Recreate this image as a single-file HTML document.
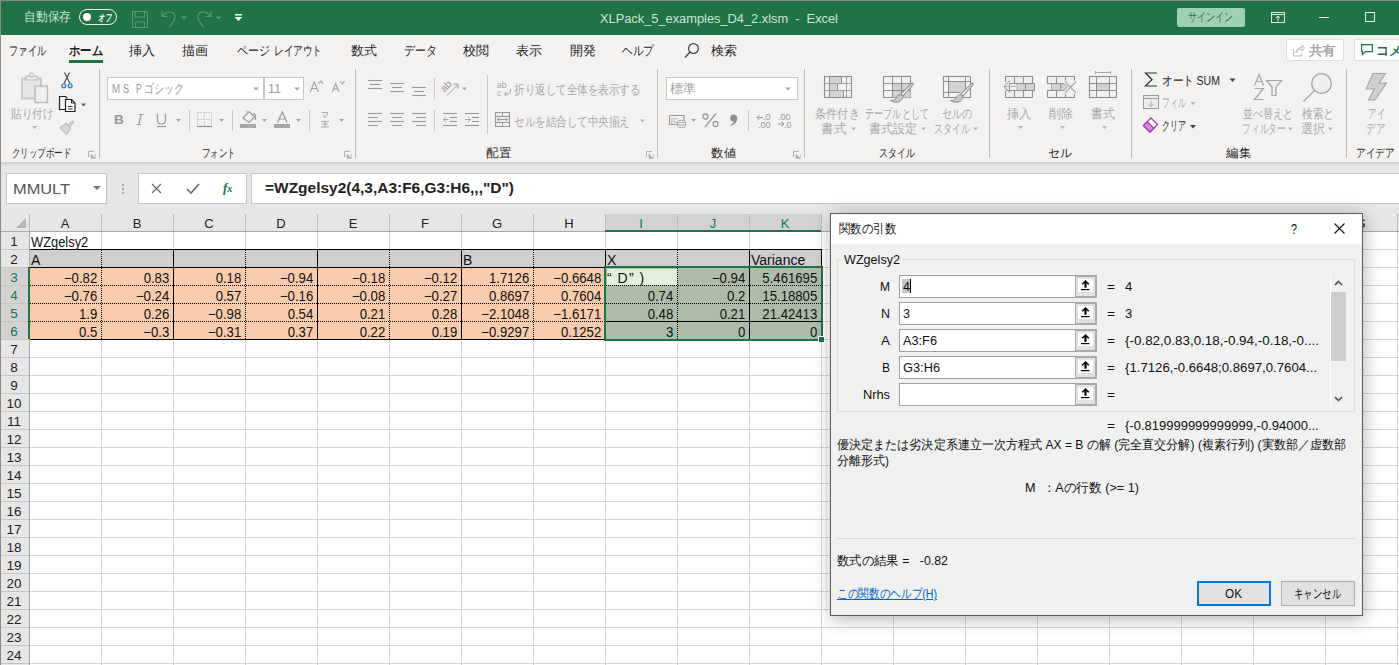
<!DOCTYPE html><html><head><meta charset="utf-8"><style>
*{margin:0;padding:0;box-sizing:border-box}
html,body{width:1399px;height:665px;overflow:hidden;background:#fff;font-family:"Liberation Sans",sans-serif;color:#222}
div,span,svg{position:absolute}
.t{white-space:nowrap;line-height:1;transform-origin:0 0}
.sep{width:1px;background:#bdbab7}
.rh{left:0px;width:28px;font-size:13.5px;text-align:center;color:#222;line-height:18px;height:18px}
.ch{top:214px;height:17px;width:72px;font-size:13px;text-align:center;color:#222;line-height:19px}
.c{font-size:14px;height:18px;line-height:21px;color:#111}
.r{text-align:right;padding-right:4px;transform:scaleX(0.94);transform-origin:100% 0}
.dl{font-size:12.5px;color:#111;line-height:1}
</style></head><body>
<div style="left:0;top:0;width:1399px;height:35px;background:#217346"></div>
<div style="left:0;top:0;width:1399px;height:1px;background:#8a8a8a"></div>
<div class="t" style="left:24px;top:10px;color:#c9e0d2;font-size:13px;transform:scaleX(0.904);">自動保存</div>
<div style="left:79px;top:9px;width:38px;height:16px;border:1.5px solid #e8f2ec;border-radius:8px"></div>
<div style="left:83px;top:13px;width:8px;height:8px;border-radius:50%;background:#fff"></div>
<div class="t" style="left:98px;top:13px;color:#fff;font-size:10px;font-weight:bold;font-style:italic;transform:scaleX(0.650);">オフ</div>
<svg style="left:132px;top:11px" width="17" height="17" viewBox="0 0 17 17"><path d="M0.5 0.5h13.5l1.5 1.5v14.5h-15z M3 0.5v5.5h9.5v-5.5 M3.5 16.5v-5.5h9v5.5" fill="none" stroke="#5c9a76" stroke-width="1.1"/></svg>
<svg style="left:161px;top:10px" width="30" height="18" viewBox="0 0 30 18"><path d="M1 1v5.5h5.5 M1.5 6.5c3-5.5 12-6.5 12.5 0c0.2 3-2.5 7-5.5 10.5" fill="none" stroke="#5c9a76" stroke-width="1.2"/><path d="M20 6.5h6l-3 3z" fill="#5c9a76"/></svg>
<svg style="left:196px;top:10px" width="30" height="18" viewBox="0 0 30 18"><path d="M15 1v5.5h-5.5 M14.5 6.5c-3-5.5-12-6.5-12.5 0c-0.2 3 2.5 7 5.5 10.5" fill="none" stroke="#5c9a76" stroke-width="1.2"/><path d="M19.5 6.5h6l-3 3z" fill="#5c9a76"/></svg>
<svg style="left:234px;top:14px" width="9" height="8" viewBox="0 0 9 8"><rect x="1" y="0" width="7" height="1.5" fill="#fff"/><path d="M0.5 3h8l-4 4z" fill="#fff"/></svg>
<div class="t" style="left:600px;top:12px;color:#cfe4d7;font-size:13px;transform:scaleX(0.986);">XLPack_5_examples_D4_2.xlsm&nbsp;&nbsp;-&nbsp;&nbsp;Excel</div>
<div style="left:1177px;top:8px;width:68px;height:19px;background:#a0d0b3;border-radius:2px"></div>
<div class="t" style="left:1188px;top:11px;color:#217346;font-size:12px;transform:scaleX(0.750);">サインイン</div>
<svg style="left:1271px;top:12px" width="14" height="11" viewBox="0 0 14 11"><rect x="0.5" y="0.5" width="13" height="10" fill="none" stroke="#d8e8de"/><path d="M0.5 2.5h13 M7 9.5v-5.5 M5 6l2-2l2 2" fill="none" stroke="#d8e8de"/></svg>
<div style="left:1319px;top:17px;width:10px;height:1px;background:#e8f2ec"></div>
<div style="left:1365px;top:12px;width:10px;height:10px;border:1px solid #e8f2ec"></div>
<div style="left:0;top:35px;width:1399px;height:127px;background:#f3f2f1"></div>
<div style="left:0;top:0;width:1px;height:665px;background:#8a8a8a;z-index:50"></div>
<div class="t" style="left:9px;top:44px;color:#262626;font-size:13px;transform:scaleX(0.712);">ファイル</div>
<div class="t" style="left:69px;top:44px;color:#262626;font-size:13px;font-weight:bold;transform:scaleX(0.872);">ホーム</div>
<div class="t" style="left:129px;top:44px;color:#262626;font-size:13px;">挿入</div>
<div class="t" style="left:182px;top:44px;color:#262626;font-size:13px;">描画</div>
<div class="t" style="left:237px;top:44px;color:#262626;font-size:13px;transform:scaleX(0.846);">ページ</div>
<div class="t" style="left:274px;top:44px;color:#262626;font-size:13px;transform:scaleX(0.738);">レイアウト</div>
<div class="t" style="left:351px;top:44px;color:#262626;font-size:13px;">数式</div>
<div class="t" style="left:404px;top:44px;color:#262626;font-size:13px;transform:scaleX(0.846);">データ</div>
<div class="t" style="left:463px;top:44px;color:#262626;font-size:13px;">校閲</div>
<div class="t" style="left:516px;top:44px;color:#262626;font-size:13px;">表示</div>
<div class="t" style="left:570px;top:44px;color:#262626;font-size:13px;">開発</div>
<div class="t" style="left:622px;top:44px;color:#262626;font-size:13px;transform:scaleX(0.821);">ヘルプ</div>
<div class="t" style="left:711px;top:44px;color:#262626;font-size:13px;">検索</div>
<div style="left:69px;top:60px;width:34px;height:3px;background:#217346"></div>
<svg style="left:0;top:0" width="1399" height="70" viewBox="0 0 1399 70"><circle cx="693.5" cy="48.5" r="4.9" fill="none" stroke="#444" stroke-width="1.2"/><path d="M690 52l-5 5.5" stroke="#444" stroke-width="1.3"/></svg>
<div style="left:1286px;top:39px;width:58px;height:22px;background:#fff;border:1px solid #e1dfdd;border-radius:2px"></div>
<svg style="left:1292px;top:44px" width="13" height="13" viewBox="0 0 13 13"><path d="M1.5 5v7h8v-2" fill="none" stroke="#bbb"/><path d="M4 9c0-4 3-5.5 6-5.5v-2.5l2.5 3l-2.5 3v-2c-3 0-5 1-6 4z" fill="none" stroke="#bbb"/></svg>
<div class="t" style="left:1309px;top:44px;color:#a6a6a6;font-size:13px;font-weight:bold;transform:scaleX(1.038);">共有</div>
<div style="left:1354px;top:39px;width:60px;height:22px;background:#fff;border:1px solid #e1dfdd;border-radius:2px"></div>
<svg style="left:1361px;top:44px" width="12" height="12" viewBox="0 0 12 12"><path d="M0.6 0.6h10.8v7h-7l-3 3v-3h-0.8z" fill="none" stroke="#217346" stroke-width="1.2"/></svg>
<div class="t" style="left:1376px;top:44px;color:#217346;font-size:13px;font-weight:bold;">コメント</div>
<div class="sep" style="left:99px;top:69px;height:89px"></div>
<div class="sep" style="left:355px;top:69px;height:89px"></div>
<div class="sep" style="left:657px;top:69px;height:89px"></div>
<div class="sep" style="left:804px;top:69px;height:89px"></div>
<div class="sep" style="left:989px;top:69px;height:89px"></div>
<div class="sep" style="left:1131px;top:69px;height:89px"></div>
<div class="sep" style="left:1346px;top:69px;height:89px"></div>
<div class="t" style="left:12px;top:147px;color:#262626;font-size:12px;transform:scaleX(0.702);">クリップボード</div>
<div class="t" style="left:202px;top:147px;color:#262626;font-size:12px;transform:scaleX(0.708);">フォント</div>
<div class="t" style="left:486px;top:147px;color:#262626;font-size:12px;transform:scaleX(1.042);">配置</div>
<div class="t" style="left:711px;top:147px;color:#262626;font-size:12px;transform:scaleX(1.042);">数値</div>
<div class="t" style="left:879px;top:147px;color:#262626;font-size:12px;transform:scaleX(0.750);">スタイル</div>
<div class="t" style="left:1048px;top:147px;color:#262626;font-size:12px;">セル</div>
<div class="t" style="left:1226px;top:147px;color:#262626;font-size:12px;transform:scaleX(1.042);">編集</div>
<div class="t" style="left:1356px;top:147px;color:#262626;font-size:12px;transform:scaleX(0.812);">アイデア</div>
<svg style="left:88px;top:151px" width="8" height="8" viewBox="0 0 8 8"><path d="M0.5 6v-5.5h5.5" fill="none" stroke="#b0b0b0"/><path d="M3 3l4.5 4.5h-4.5z M7.5 3v4.5" fill="#b0b0b0" stroke="#b0b0b0" stroke-width="0.6"/></svg>
<svg style="left:344px;top:151px" width="8" height="8" viewBox="0 0 8 8"><path d="M0.5 6v-5.5h5.5" fill="none" stroke="#b0b0b0"/><path d="M3 3l4.5 4.5h-4.5z M7.5 3v4.5" fill="#b0b0b0" stroke="#b0b0b0" stroke-width="0.6"/></svg>
<svg style="left:646px;top:151px" width="8" height="8" viewBox="0 0 8 8"><path d="M0.5 6v-5.5h5.5" fill="none" stroke="#b0b0b0"/><path d="M3 3l4.5 4.5h-4.5z M7.5 3v4.5" fill="#b0b0b0" stroke="#b0b0b0" stroke-width="0.6"/></svg>
<svg style="left:793px;top:151px" width="8" height="8" viewBox="0 0 8 8"><path d="M0.5 6v-5.5h5.5" fill="none" stroke="#b0b0b0"/><path d="M3 3l4.5 4.5h-4.5z M7.5 3v4.5" fill="#b0b0b0" stroke="#b0b0b0" stroke-width="0.6"/></svg>
<svg style="left:0;top:0;overflow:visible" width="1399" height="170" viewBox="0 0 1399 170"><path d="M22 78.5h4v-2h11v2h4v20h-19z" fill="#e6e6e6" stroke="#c9c9c9" stroke-width="2"/><path d="M26 76.5h11v3.5h-11z" fill="#f3f2f1" stroke="#c9c9c9" stroke-width="1.3"/><circle cx="31.5" cy="75" r="2.2" fill="none" stroke="#c9c9c9" stroke-width="1.2"/><rect x="35" y="86" width="12.5" height="16.5" fill="#efefef" stroke="#b9b9b9" stroke-width="1.4"/><path d="M32 126h5.5l-2.75 3z" fill="#b4b4b4"/><path d="M64.5 72.5l5.5 11 M69.5 72.5l-5.5 11" stroke="#444" stroke-width="1.1"/><circle cx="63.8" cy="85.8" r="1.9" fill="none" stroke="#2b88d8" stroke-width="1.4"/><circle cx="70.2" cy="85.8" r="1.9" fill="none" stroke="#2b88d8" stroke-width="1.4"/><path d="M65.5 109.5h-6v-13h6l2 2" fill="none" stroke="#222" stroke-width="1.2"/><path d="M65.5 99.5h6l3.5 3.5v8.5h-9.5z" fill="#fff" stroke="#222" stroke-width="1.2"/><path d="M71.5 99.5v3.5h3.5" fill="none" stroke="#222"/><path d="M68 106.5h4.5 M68 109h4.5" stroke="#333"/><path d="M81 103.5h5l-2.5 3z" fill="#555"/><path d="M67 126l5-4.5c0.8-0.8 2-0.2 1.5 0.8l-4.5 5" fill="none" stroke="#bdbdbd" stroke-width="1.3"/><path d="M60 127.5l6-4l4.5 4.5l-4 6.5z" fill="#d8d8d8" stroke="#bdbdbd" stroke-width="1.1"/><text x="114" y="124" font-size="13.5" font-weight="bold" fill="#9a9a9a" font-family="Liberation Sans">B</text><path d="M139 114.5h4.5 M136.5 124.5h4.5 M141.3 114.5l-2.5 10" stroke="#9a9a9a" stroke-width="1.2" fill="none"/><path d="M157.5 114v6c0 3 1.5 4 4 4s4-1 4-4v-6" fill="none" stroke="#9a9a9a" stroke-width="1.2"/><path d="M157 126.5h9" stroke="#9a9a9a" stroke-width="1.2"/><path d="M176 119h5l-2.5 3z" fill="#a0a0a0"/><path d="M189.5 110v21 M232.5 110v21 M309.5 110v21" stroke="#c9c6c3"/><path d="M197.5 112.5h14v13.5 M197.5 112.5v13.5 M204.5 113v13 M198 119.5h13" fill="none" stroke="#bdbdbd" stroke-dasharray="1.5 1.2"/><path d="M197 126.5h15" stroke="#8f8f8f" stroke-width="1.1"/><path d="M219 119h5l-2.5 3z" fill="#a0a0a0"/><path d="M243 118l6-6.5l5.5 5.5l-5.5 5.5z" fill="none" stroke="#9a9a9a" stroke-width="1.2"/><path d="M252 115c1.5-2.5 3.5-1.5 3.5 2v3" fill="none" stroke="#9a9a9a" stroke-width="1.2"/><path d="M247.5 112l-1.5-1.5" stroke="#9a9a9a"/><rect x="240" y="124" width="16" height="4" fill="#a9a7a5"/><path d="M262 119h5l-2.5 3z" fill="#a0a0a0"/><path d="M277.5 122.5l4.8-10.5l4.8 10.5 M279.3 119h6" fill="none" stroke="#9a9a9a" stroke-width="1.2"/><rect x="274" y="124" width="16" height="4" fill="#a9a7a5"/><path d="M296 119h5l-2.5 3z" fill="#a0a0a0"/><path d="M321.5 112.5h6c0 2.5-1 4-3 5 M324 114.5v3" fill="none" stroke="#aaa" stroke-width="1"/><path d="M321 121.5h8 M322 124h6 M321 127h8 M325 121v6" stroke="#aaa" stroke-width="1.2"/><path d="M339 119h5l-2.5 3z" fill="#a0a0a0"/><path d="M368 80.5h14" stroke="#9a9a9a" stroke-width="1.1"/><path d="M370 84.5h10" stroke="#9a9a9a" stroke-width="1.1"/><path d="M368 88.5h14" stroke="#9a9a9a" stroke-width="1.1"/><path d="M390 83.5h14" stroke="#9a9a9a" stroke-width="1.1"/><path d="M392 87.5h10" stroke="#9a9a9a" stroke-width="1.1"/><path d="M390 91.5h14" stroke="#9a9a9a" stroke-width="1.1"/><path d="M412 87.5h14" stroke="#9a9a9a" stroke-width="1.1"/><path d="M414 91.5h10" stroke="#9a9a9a" stroke-width="1.1"/><path d="M412 95.5h14" stroke="#9a9a9a" stroke-width="1.1"/><path d="M368 113.5h14" stroke="#9a9a9a" stroke-width="1.1"/><path d="M368 117.5h10" stroke="#9a9a9a" stroke-width="1.1"/><path d="M368 121.5h14" stroke="#9a9a9a" stroke-width="1.1"/><path d="M368 125.5h10" stroke="#9a9a9a" stroke-width="1.1"/><path d="M390 113.5h14" stroke="#9a9a9a" stroke-width="1.1"/><path d="M392 117.5h10" stroke="#9a9a9a" stroke-width="1.1"/><path d="M390 121.5h14" stroke="#9a9a9a" stroke-width="1.1"/><path d="M392 125.5h10" stroke="#9a9a9a" stroke-width="1.1"/><path d="M412 113.5h14" stroke="#9a9a9a" stroke-width="1.1"/><path d="M416 117.5h10" stroke="#9a9a9a" stroke-width="1.1"/><path d="M412 121.5h14" stroke="#9a9a9a" stroke-width="1.1"/><path d="M416 125.5h10" stroke="#9a9a9a" stroke-width="1.1"/><path d="M434.5 78v21 M434.5 110v21 M487.5 75v59" stroke="#c6c6c6"/><g transform="translate(-2.5,-3) rotate(-45 449 88)"><text x="442" y="92" font-size="10.5" fill="#9a9a9a" font-family="Liberation Sans">ab</text></g><path d="M447 95.5l11-11 M453.5 84h4.5v4.5" fill="none" stroke="#9a9a9a" stroke-width="1"/><path d="M462 87.5h5l-2.5 3z" fill="#a0a0a0"/><path d="M443 113.5h14" stroke="#9a9a9a" stroke-width="1.1"/><path d="M450 117.5h7" stroke="#9a9a9a" stroke-width="1.1"/><path d="M450 121.5h7" stroke="#9a9a9a" stroke-width="1.1"/><path d="M443 125.5h14" stroke="#9a9a9a" stroke-width="1.1"/><path d="M443.5 119.5h5 M446 117l-2.5 2.5l2.5 2.5" fill="none" stroke="#aaa"/><path d="M465 113.5h14" stroke="#9a9a9a" stroke-width="1.1"/><path d="M472 117.5h7" stroke="#9a9a9a" stroke-width="1.1"/><path d="M472 121.5h7" stroke="#9a9a9a" stroke-width="1.1"/><path d="M465 125.5h14" stroke="#9a9a9a" stroke-width="1.1"/><path d="M465 119.5h5.5 M468 117l2.5 2.5l-2.5 2.5" fill="none" stroke="#aaa"/><text x="497" y="88" font-size="8.5" fill="#a4a4a4" font-family="Liberation Sans">ab</text><text x="497" y="95.5" font-size="8.5" fill="#a4a4a4" font-family="Liberation Sans">c</text><path d="M510.5 89v2.5c0 1.5-1 2.5-2.5 2.5h-3 M506.5 92l-2 2l2 2" fill="none" stroke="#a4a4a4" stroke-width="1"/><path d="M495.5 112.5h14v14h-14z" fill="#efefef" stroke="#9a9a9a" stroke-width="1.1"/><path d="M495.5 116.5h14 M495.5 122.5h14 M502.5 112.5v4 M502.5 122.5v4" stroke="#9a9a9a"/><path d="M497.5 119.5h10 M499.5 117.5l-2 2l2 2 M505.5 117.5l2 2l-2 2" fill="none" stroke="#9a9a9a"/><path d="M640 119.5h5l-2.5 3z" fill="#b4b4b4"/><path d="M669.5 115.5h14.5v9 M669.5 115.5v9h8" fill="none" stroke="#9a9a9a" stroke-width="1.2"/><text x="671" y="123" font-size="7" fill="#9a9a9a" font-family="Liberation Sans">[C</text><path d="M677.5 121.5c0-1.5 8-1.5 8 0v5c0 1.5-8 1.5-8 0z" fill="#eee" stroke="#aaa" stroke-width="1"/><path d="M677.5 121.5c0 1.5 8 1.5 8 0 M677.5 124c0 1.5 8 1.5 8 0" fill="none" stroke="#aaa"/><path d="M691 119h5l-2.5 3z" fill="#a0a0a0"/><circle cx="705.5" cy="116.5" r="2.5" fill="none" stroke="#9a9a9a" stroke-width="1.3"/><circle cx="715.5" cy="124" r="2.5" fill="none" stroke="#9a9a9a" stroke-width="1.3"/><path d="M716 113.5l-11 13.5" stroke="#9a9a9a" stroke-width="1.3"/><path d="M733 114.5c2.8 0 4.3 1.5 4.3 4c0 3.5-3 6.5-7 7.5l-0.3-0.8c2-0.8 3.5-2.2 3.8-3.7c-2.2 0-3.6-1.3-3.6-3.3c0-2 1.3-3.7 2.8-3.7z" fill="#8e8e8e"/><path d="M748.5 110v21" stroke="#c6c6c6"/><path d="M757 117.5h6 M759.5 115l-2.5 2.5l2.5 2.5" fill="none" stroke="#9a9a9a"/><text x="763" y="120" font-size="9" fill="#9a9a9a" font-family="Liberation Sans">.0</text><text x="758" y="127.5" font-size="9" fill="#9a9a9a" font-family="Liberation Sans">.00</text><text x="778" y="120" font-size="9" fill="#9a9a9a" font-family="Liberation Sans">.00</text><path d="M778 124h6 M781.5 121.5l2.5 2.5l-2.5 2.5" fill="none" stroke="#9a9a9a"/><text x="784" y="127.5" font-size="9" fill="#9a9a9a" font-family="Liberation Sans">.0</text><rect x="824.5" y="76.5" width="27" height="21" fill="#f3f3f3" stroke="#8f8f8f" stroke-width="1.1"/><rect x="829.5" y="76.5" width="12" height="7" fill="#d2d2d2" stroke="#8f8f8f"/><rect x="829.5" y="83.5" width="8" height="7" fill="#d2d2d2" stroke="#8f8f8f"/><rect x="829.5" y="90.5" width="14" height="7" fill="#d2d2d2" stroke="#8f8f8f"/><path d="M846.5 76.5v21 M824.5 83.5h27 M824.5 90.5h27" stroke="#a0a0a0"/><rect x="883.5" y="76.5" width="27" height="21" fill="#f3f3f3" stroke="#8f8f8f" stroke-width="1.1"/><rect x="892.5" y="83.5" width="18" height="14" fill="#d2d2d2"/><path d="M892.5 76.5v21 M901.5 76.5v21 M883.5 83.5h27 M883.5 90.5h27" stroke="#8f8f8f"/><g transform="translate(-60,0)"><path d="M971.5 83.5c1-1 2.5 0 1.5 1.2l-10 11.5l-2.2-2z" fill="#f6f6f6" stroke="#8f8f8f" stroke-width="1.1"/><path d="M960.5 94.5c-2 0-4 1.5-4.5 3.5c-0.5 1.5-2.5 2.5-5.5 2.5c2 1.5 5 2 7.5 1.5c3-0.5 5-3 4.5-5.5z" fill="#c9c9c9" stroke="#8f8f8f" stroke-width="1"/></g><rect x="943.5" y="76.5" width="27" height="21" fill="#f3f3f3" stroke="#8f8f8f" stroke-width="1.1"/><rect x="948.5" y="81.5" width="17" height="11" fill="#d2d2d2"/><path d="M948.5 76.5v21 M965.5 76.5v16 M943.5 81.5h27 M943.5 92.5h17" stroke="#8f8f8f"/><g transform="translate(0,0)"><path d="M971.5 83.5c1-1 2.5 0 1.5 1.2l-10 11.5l-2.2-2z" fill="#f6f6f6" stroke="#8f8f8f" stroke-width="1.1"/><path d="M960.5 94.5c-2 0-4 1.5-4.5 3.5c-0.5 1.5-2.5 2.5-5.5 2.5c2 1.5 5 2 7.5 1.5c3-0.5 5-3 4.5-5.5z" fill="#c9c9c9" stroke="#8f8f8f" stroke-width="1"/></g><path d="M851 127.5h5l-2.5 3z" fill="#b4b4b4"/><path d="M921 127.5h5l-2.5 3z" fill="#b4b4b4"/><path d="M973 127.5h5l-2.5 3z" fill="#b4b4b4"/><path d="M1005.5 82v-5.5h27v21h-27v-6.5 M1014.5 76.5v21 M1023.5 76.5v7 M1023.5 90.5v7 M1005.5 90.5h4" fill="#f0f0f0" stroke="#8f8f8f" stroke-width="1.1"/><rect x="1009.5" y="83.5" width="25" height="7" fill="#f0f0f0" stroke="#8f8f8f"/><rect x="1016" y="84" width="18" height="6" fill="#d0d0d0"/><path d="M1025.5 83.5v7" stroke="#8f8f8f"/><path d="M1004 86.5h12.5 M1010 80.5l-6 6l6 6" fill="none" stroke="#b0b0b0" stroke-width="1.1"/><path d="M1047.5 83.5v-7h27v4 M1074.5 94v3.5h-27v-7 M1056.5 76.5v7 M1065.5 76.5v4 M1056.5 90.5v7 M1065.5 94v3.5" fill="#f0f0f0" stroke="#8f8f8f" stroke-width="1.1"/><path d="M1047.5 83.5h16 M1047.5 90.5h17" stroke="#8f8f8f"/><path d="M1051.5 83.5h12l4 3.5l-4 3.5h-12z" fill="#d0d0d0" stroke="#8f8f8f" stroke-width="0.8"/><path d="M1060.5 83.5v7" stroke="#a0a0a0"/><path d="M1065 81.5l11 11.5 M1076 81.5l-11 11.5" stroke="#a8a8a8" stroke-width="1.1"/><rect x="1089.5" y="76.5" width="27" height="21" fill="#f0f0f0" stroke="#8f8f8f" stroke-width="1.1"/><rect x="1096.5" y="83.5" width="13" height="7" fill="#d0d0d0"/><path d="M1096.5 76.5v21 M1109.5 76.5v21 M1089.5 83.5h27 M1089.5 90.5h27" stroke="#8f8f8f"/><path d="M1095.5 72.5h15 M1095.5 71v3 M1110.5 71v3" stroke="#a8a8a8" stroke-width="1.1"/><path d="M1018 126h5l-2.5 3z" fill="#b4b4b4"/><path d="M1060 126h5l-2.5 3z" fill="#b4b4b4"/><path d="M1102 126h5l-2.5 3z" fill="#b4b4b4"/><path d="M1157 73h-11.5l6.5 6.5l-6.5 6.5h11.5" fill="none" stroke="#333" stroke-width="1.2"/><path d="M1229.5 78.5h6l-3.0 3.5z" fill="#444"/><rect x="1143.5" y="95.5" width="15" height="13" fill="#ececec" stroke="#9a9a9a"/><path d="M1143.5 98.5h15" stroke="#9a9a9a"/><path d="M1151 100.5v6 M1148.5 104l2.5 2.5l2.5-2.5" fill="none" stroke="#aaa"/><path d="M1190.5 102h5l-2.5 3z" fill="#b4b4b4"/><path d="M1151 118l6.5 6.5l-7.5 7.5l-6.5-6.5z" fill="#fff" stroke="#a33bb3" stroke-width="1.3"/><path d="M1143.5 125.5l3.8-3.8l6.5 6.5l-3.8 3.8z" fill="#cf8ed8" stroke="#a33bb3" stroke-width="1.3"/><path d="M1190 125h6l-3.0 3.5z" fill="#444"/><path d="M1254.5 85.5l4.5-11l4.5 11 M1256.3 81.5h5.5 M1254.5 88.5h9l-9 11h9" fill="none" stroke="#a4a4a4" stroke-width="1.2"/><path d="M1266.5 80.5h15l-5.5 6.5v8.5h-4v-8.5z" fill="#efefef" stroke="#a4a4a4" stroke-width="1.2"/><circle cx="1321.5" cy="83.5" r="9.8" fill="#efefef" stroke="#a4a4a4" stroke-width="1.3"/><path d="M1314.5 90.5l-11 11" stroke="#a4a4a4" stroke-width="1.3"/><path d="M1373 73.5h12.5l-6.5 9.5h7.5l-11.5 17h-6.5l6-11h-8.5z" fill="#cfcfcf" stroke="#a4a4a4" stroke-width="1.1"/></svg>
<div class="t" style="left:11px;top:107px;color:#a8a8a8;font-size:13px;transform:scaleX(0.808);">貼り付け</div>
<div style="left:107px;top:77px;width:157px;height:23px;background:#fff;border:1px solid #c6c6c6"></div>
<div style="left:264px;top:77px;width:40px;height:23px;background:#fff;border:1px solid #c6c6c6"></div>
<div class="t" style="left:111px;top:82px;color:#9a9a9a;font-size:13px;transform:scaleX(0.771);">ＭＳ Ｐゴシック</div>
<div class="t" style="left:268px;top:82px;color:#9a9a9a;font-size:13px;transform:scaleX(0.963);">11</div>
<svg style="left:0;top:0" width="1399" height="170" viewBox="0 0 1399 170"><path d="M253 87.5h6l-3 3z M294 87.5h6l-3 3z M785 87.5h6l-3 3z" fill="#a6a6a6"/></svg>
<svg style="left:0;top:0" width="1399" height="170" viewBox="0 0 1399 170"><path d="M310.3 92l4-10l4 10 M311.6 88.5h5.5 M318.5 83.5l2.3-2.3l2.3 2.3" fill="none" stroke="#9e9e9e" stroke-width="1.1"/><path d="M332.3 92l3.3-8.5l3.3 8.5 M333.4 89h4.5 M340 81.3l2.3 2.3l2.3-2.3" fill="none" stroke="#9e9e9e" stroke-width="1.1"/></svg>
<div class="t" style="left:514px;top:83px;color:#a8a8a8;font-size:13px;transform:scaleX(0.808);">折り返して全体を表示する</div>
<div class="t" style="left:514px;top:115px;color:#a8a8a8;font-size:13px;transform:scaleX(0.811);">セルを結合して中央揃え</div>
<div style="left:666px;top:77px;width:132px;height:23px;background:#fff;border:1px solid #c6c6c6"></div>
<div class="t" style="left:670px;top:82px;color:#9a9a9a;font-size:13px;">標準</div>
<svg style="left:0;top:0" width="1399" height="170" viewBox="0 0 1399 170"><path d="M785 87.5h6l-3 3z" fill="#a6a6a6"/></svg>
<div class="t" style="left:815px;top:107px;color:#a8a8a8;font-size:13px;transform:scaleX(0.865);">条件付き</div>
<div class="t" style="left:821px;top:122px;color:#a8a8a8;font-size:13px;transform:scaleX(0.962);">書式</div>
<div class="t" style="left:865px;top:107px;color:#a8a8a8;font-size:13px;transform:scaleX(0.703);">テーブルとして</div>
<div class="t" style="left:869px;top:122px;color:#a8a8a8;font-size:13px;transform:scaleX(0.923);">書式設定</div>
<div class="t" style="left:942px;top:107px;color:#a8a8a8;font-size:13px;transform:scaleX(0.769);">セルの</div>
<div class="t" style="left:934px;top:122px;color:#a8a8a8;font-size:13px;transform:scaleX(0.692);">スタイル</div>
<div class="t" style="left:1007px;top:107px;color:#a8a8a8;font-size:13px;transform:scaleX(0.923);">挿入</div>
<div class="t" style="left:1049px;top:107px;color:#a8a8a8;font-size:13px;transform:scaleX(0.923);">削除</div>
<div class="t" style="left:1091px;top:107px;color:#a8a8a8;font-size:13px;transform:scaleX(0.923);">書式</div>
<div class="t" style="left:1162px;top:74px;color:#262626;font-size:13px;transform:scaleX(0.811);">オート SUM</div>
<div class="t" style="left:1162px;top:96px;color:#a8a8a8;font-size:13px;transform:scaleX(0.615);">フィル</div>
<div class="t" style="left:1162px;top:119px;color:#262626;font-size:13px;transform:scaleX(0.615);">クリア</div>
<div class="t" style="left:1243px;top:107px;color:#a8a8a8;font-size:13px;transform:scaleX(0.769);">並べ替えと</div>
<div class="t" style="left:1242px;top:122px;color:#a8a8a8;font-size:13px;transform:scaleX(0.677);">フィルター</div>
<div class="t" style="left:1302px;top:107px;color:#a8a8a8;font-size:13px;transform:scaleX(0.821);">検索と</div>
<div class="t" style="left:1301px;top:122px;color:#a8a8a8;font-size:13px;transform:scaleX(0.923);">選択</div>
<svg style="left:0;top:0" width="1399" height="170" viewBox="0 0 1399 170"><path d="M1288 127.5h5l-2.5 3z M1328 127.5h5l-2.5 3z" fill="#b4b4b4"/></svg>
<div class="t" style="left:1368px;top:107px;color:#a8a8a8;font-size:13px;transform:scaleX(0.654);">アイ</div>
<div class="t" style="left:1366px;top:122px;color:#a8a8a8;font-size:13px;transform:scaleX(0.731);">デア</div>
<div style="left:0;top:162px;width:1399px;height:52px;background:#e6e6e6"></div>
<div style="left:0;top:162px;width:1399px;height:4px;background:linear-gradient(#cccccc,#e6e6e6)"></div>
<div style="left:6px;top:173px;width:101px;height:31px;background:#fff;border:1px solid #c6c6c6"></div>
<div class="t" style="left:13px;top:182px;color:#555;font-size:14px;transform:scaleX(1.170);">MMULT</div>
<svg style="left:93px;top:186px" width="8" height="5" viewBox="0 0 8 5"><path d="M0 0h8l-4 4z" fill="#777"/></svg>
<div style="left:122px;top:184px;width:2px;height:2px;background:#aaa"></div>
<div style="left:122px;top:188px;width:2px;height:2px;background:#aaa"></div>
<div style="left:122px;top:192px;width:2px;height:2px;background:#aaa"></div>
<div style="left:138px;top:173px;width:109px;height:31px;background:#fff;border:1px solid #c6c6c6"></div>
<svg style="left:151px;top:183px" width="11" height="11" viewBox="0 0 11 11"><path d="M1 1l9 9M10 1l-9 9" stroke="#666" stroke-width="1.2"/></svg>
<svg style="left:186px;top:183px" width="14" height="11" viewBox="0 0 14 11"><path d="M1 6l4 4l8-9" fill="none" stroke="#666" stroke-width="1.6"/></svg>
<div class="t" style="left:223px;top:181px;font-size:13px;color:#217346;font-style:italic;font-weight:bold;font-family:'Liberation Serif',serif">f<span style="position:static;font-size:10px">x</span></div>
<div style="left:251px;top:173px;width:1160px;height:31px;background:#fff;border:1px solid #c6c6c6"></div>
<div class="t" style="left:265px;top:181px;color:#222;font-size:14.5px;font-weight:bold;transform:scaleX(1.067);">=WZgelsy2(4,3,A3:F6,G3:H6,,,"D")</div>
<div style="left:0;top:214px;width:1399px;height:451px;background:#fff"></div>
<div style="left:0;top:214px;width:1399px;height:17px;background:#e6e6e6"></div>
<div style="left:0;top:231px;width:29px;height:434px;background:#e6e6e6"></div>
<div style="left:605px;top:214px;width:216px;height:17px;background:#d2d2d2"></div>
<div style="left:1px;top:267px;width:28px;height:72px;background:#d2d2d2"></div>
<svg style="left:16px;top:218px" width="10" height="10" viewBox="0 0 10 10"><path d="M10 0v10h-10z" fill="#b4b4b4"/></svg>
<div style="left:29px;top:214px;width:1px;height:17px;background:#bcbcbc"></div>
<div style="left:101px;top:214px;width:1px;height:17px;background:#bcbcbc"></div>
<div style="left:173px;top:214px;width:1px;height:17px;background:#bcbcbc"></div>
<div style="left:245px;top:214px;width:1px;height:17px;background:#bcbcbc"></div>
<div style="left:317px;top:214px;width:1px;height:17px;background:#bcbcbc"></div>
<div style="left:389px;top:214px;width:1px;height:17px;background:#bcbcbc"></div>
<div style="left:461px;top:214px;width:1px;height:17px;background:#bcbcbc"></div>
<div style="left:533px;top:214px;width:1px;height:17px;background:#bcbcbc"></div>
<div style="left:605px;top:214px;width:1px;height:17px;background:#bcbcbc"></div>
<div style="left:677px;top:214px;width:1px;height:17px;background:#bcbcbc"></div>
<div style="left:749px;top:214px;width:1px;height:17px;background:#bcbcbc"></div>
<div style="left:821px;top:214px;width:1px;height:17px;background:#bcbcbc"></div>
<div style="left:893px;top:214px;width:1px;height:17px;background:#bcbcbc"></div>
<div style="left:965px;top:214px;width:1px;height:17px;background:#bcbcbc"></div>
<div style="left:1037px;top:214px;width:1px;height:17px;background:#bcbcbc"></div>
<div style="left:1109px;top:214px;width:1px;height:17px;background:#bcbcbc"></div>
<div style="left:1181px;top:214px;width:1px;height:17px;background:#bcbcbc"></div>
<div style="left:1253px;top:214px;width:1px;height:17px;background:#bcbcbc"></div>
<div style="left:1325px;top:214px;width:1px;height:17px;background:#bcbcbc"></div>
<div style="left:1397px;top:214px;width:1px;height:17px;background:#bcbcbc"></div>
<div style="left:0;top:231px;width:1399px;height:1px;background:#a9a9a9"></div>
<div style="left:29px;top:231px;width:1px;height:434px;background:#a9a9a9"></div>
<div style="left:0;top:249px;width:29px;height:1px;background:#c6c6c6"></div>
<div style="left:0;top:267px;width:29px;height:1px;background:#c6c6c6"></div>
<div style="left:0;top:285px;width:29px;height:1px;background:#c6c6c6"></div>
<div style="left:0;top:303px;width:29px;height:1px;background:#c6c6c6"></div>
<div style="left:0;top:321px;width:29px;height:1px;background:#c6c6c6"></div>
<div style="left:0;top:339px;width:29px;height:1px;background:#c6c6c6"></div>
<div style="left:0;top:357px;width:29px;height:1px;background:#c6c6c6"></div>
<div style="left:0;top:375px;width:29px;height:1px;background:#c6c6c6"></div>
<div style="left:0;top:393px;width:29px;height:1px;background:#c6c6c6"></div>
<div style="left:0;top:411px;width:29px;height:1px;background:#c6c6c6"></div>
<div style="left:0;top:429px;width:29px;height:1px;background:#c6c6c6"></div>
<div style="left:0;top:447px;width:29px;height:1px;background:#c6c6c6"></div>
<div style="left:0;top:465px;width:29px;height:1px;background:#c6c6c6"></div>
<div style="left:0;top:483px;width:29px;height:1px;background:#c6c6c6"></div>
<div style="left:0;top:501px;width:29px;height:1px;background:#c6c6c6"></div>
<div style="left:0;top:519px;width:29px;height:1px;background:#c6c6c6"></div>
<div style="left:0;top:537px;width:29px;height:1px;background:#c6c6c6"></div>
<div style="left:0;top:555px;width:29px;height:1px;background:#c6c6c6"></div>
<div style="left:0;top:573px;width:29px;height:1px;background:#c6c6c6"></div>
<div style="left:0;top:591px;width:29px;height:1px;background:#c6c6c6"></div>
<div style="left:0;top:609px;width:29px;height:1px;background:#c6c6c6"></div>
<div style="left:0;top:627px;width:29px;height:1px;background:#c6c6c6"></div>
<div style="left:0;top:645px;width:29px;height:1px;background:#c6c6c6"></div>
<div style="left:0;top:663px;width:29px;height:1px;background:#c6c6c6"></div>
<div style="left:101px;top:232px;width:1px;height:433px;background:#d4d4d4"></div>
<div style="left:173px;top:232px;width:1px;height:433px;background:#d4d4d4"></div>
<div style="left:245px;top:232px;width:1px;height:433px;background:#d4d4d4"></div>
<div style="left:317px;top:232px;width:1px;height:433px;background:#d4d4d4"></div>
<div style="left:389px;top:232px;width:1px;height:433px;background:#d4d4d4"></div>
<div style="left:461px;top:232px;width:1px;height:433px;background:#d4d4d4"></div>
<div style="left:533px;top:232px;width:1px;height:433px;background:#d4d4d4"></div>
<div style="left:605px;top:232px;width:1px;height:433px;background:#d4d4d4"></div>
<div style="left:677px;top:232px;width:1px;height:433px;background:#d4d4d4"></div>
<div style="left:749px;top:232px;width:1px;height:433px;background:#d4d4d4"></div>
<div style="left:821px;top:232px;width:1px;height:433px;background:#d4d4d4"></div>
<div style="left:893px;top:232px;width:1px;height:433px;background:#d4d4d4"></div>
<div style="left:965px;top:232px;width:1px;height:433px;background:#d4d4d4"></div>
<div style="left:1037px;top:232px;width:1px;height:433px;background:#d4d4d4"></div>
<div style="left:1109px;top:232px;width:1px;height:433px;background:#d4d4d4"></div>
<div style="left:1181px;top:232px;width:1px;height:433px;background:#d4d4d4"></div>
<div style="left:1253px;top:232px;width:1px;height:433px;background:#d4d4d4"></div>
<div style="left:1325px;top:232px;width:1px;height:433px;background:#d4d4d4"></div>
<div style="left:1397px;top:232px;width:1px;height:433px;background:#d4d4d4"></div>
<div style="left:30px;top:249px;width:1369px;height:1px;background:#d4d4d4"></div>
<div style="left:30px;top:267px;width:1369px;height:1px;background:#d4d4d4"></div>
<div style="left:30px;top:285px;width:1369px;height:1px;background:#d4d4d4"></div>
<div style="left:30px;top:303px;width:1369px;height:1px;background:#d4d4d4"></div>
<div style="left:30px;top:321px;width:1369px;height:1px;background:#d4d4d4"></div>
<div style="left:30px;top:339px;width:1369px;height:1px;background:#d4d4d4"></div>
<div style="left:30px;top:357px;width:1369px;height:1px;background:#d4d4d4"></div>
<div style="left:30px;top:375px;width:1369px;height:1px;background:#d4d4d4"></div>
<div style="left:30px;top:393px;width:1369px;height:1px;background:#d4d4d4"></div>
<div style="left:30px;top:411px;width:1369px;height:1px;background:#d4d4d4"></div>
<div style="left:30px;top:429px;width:1369px;height:1px;background:#d4d4d4"></div>
<div style="left:30px;top:447px;width:1369px;height:1px;background:#d4d4d4"></div>
<div style="left:30px;top:465px;width:1369px;height:1px;background:#d4d4d4"></div>
<div style="left:30px;top:483px;width:1369px;height:1px;background:#d4d4d4"></div>
<div style="left:30px;top:501px;width:1369px;height:1px;background:#d4d4d4"></div>
<div style="left:30px;top:519px;width:1369px;height:1px;background:#d4d4d4"></div>
<div style="left:30px;top:537px;width:1369px;height:1px;background:#d4d4d4"></div>
<div style="left:30px;top:555px;width:1369px;height:1px;background:#d4d4d4"></div>
<div style="left:30px;top:573px;width:1369px;height:1px;background:#d4d4d4"></div>
<div style="left:30px;top:591px;width:1369px;height:1px;background:#d4d4d4"></div>
<div style="left:30px;top:609px;width:1369px;height:1px;background:#d4d4d4"></div>
<div style="left:30px;top:627px;width:1369px;height:1px;background:#d4d4d4"></div>
<div style="left:30px;top:645px;width:1369px;height:1px;background:#d4d4d4"></div>
<div style="left:30px;top:663px;width:1369px;height:1px;background:#d4d4d4"></div>
<div style="left:605px;top:230px;width:216px;height:2px;background:#217346"></div>
<div style="left:28px;top:267px;width:2px;height:72px;background:#217346"></div>
<div class="t ch" style="left:29px;color:#222">A</div>
<div class="t ch" style="left:101px;color:#222">B</div>
<div class="t ch" style="left:173px;color:#222">C</div>
<div class="t ch" style="left:245px;color:#222">D</div>
<div class="t ch" style="left:317px;color:#222">E</div>
<div class="t ch" style="left:389px;color:#222">F</div>
<div class="t ch" style="left:461px;color:#222">G</div>
<div class="t ch" style="left:533px;color:#222">H</div>
<div class="t ch" style="left:605px;color:#217346">I</div>
<div class="t ch" style="left:677px;color:#217346">J</div>
<div class="t ch" style="left:749px;color:#217346">K</div>
<div class="t ch" style="left:821px;color:#222">L</div>
<div class="t ch" style="left:893px;color:#222">M</div>
<div class="t ch" style="left:965px;color:#222">N</div>
<div class="t ch" style="left:1037px;color:#222">O</div>
<div class="t ch" style="left:1109px;color:#222">P</div>
<div class="t ch" style="left:1181px;color:#222">Q</div>
<div class="t ch" style="left:1253px;color:#222">R</div>
<div class="t ch" style="left:1325px;color:#222">S</div>
<div class="t rh" style="top:233px;color:#222">1</div>
<div class="t rh" style="top:251px;color:#222">2</div>
<div class="t rh" style="top:269px;color:#217346">3</div>
<div class="t rh" style="top:287px;color:#217346">4</div>
<div class="t rh" style="top:305px;color:#217346">5</div>
<div class="t rh" style="top:323px;color:#217346">6</div>
<div class="t rh" style="top:341px;color:#222">7</div>
<div class="t rh" style="top:359px;color:#222">8</div>
<div class="t rh" style="top:377px;color:#222">9</div>
<div class="t rh" style="top:395px;color:#222">10</div>
<div class="t rh" style="top:413px;color:#222">11</div>
<div class="t rh" style="top:431px;color:#222">12</div>
<div class="t rh" style="top:449px;color:#222">13</div>
<div class="t rh" style="top:467px;color:#222">14</div>
<div class="t rh" style="top:485px;color:#222">15</div>
<div class="t rh" style="top:503px;color:#222">16</div>
<div class="t rh" style="top:521px;color:#222">17</div>
<div class="t rh" style="top:539px;color:#222">18</div>
<div class="t rh" style="top:557px;color:#222">19</div>
<div class="t rh" style="top:575px;color:#222">20</div>
<div class="t rh" style="top:593px;color:#222">21</div>
<div class="t rh" style="top:611px;color:#222">22</div>
<div class="t rh" style="top:629px;color:#222">23</div>
<div class="t rh" style="top:647px;color:#222">24</div>
<div style="left:30px;top:250px;width:791px;height:17px;background:#d0cece"></div>
<div style="left:30px;top:268px;width:575px;height:71px;background:#f8cbad"></div>
<div style="left:605px;top:268px;width:216px;height:71px;background:#aebba8"></div>
<div style="left:607px;top:269px;width:70px;height:16px;background:#e2efda"></div>
<div style="left:30px;top:249px;width:792px;height:1px;background:#000"></div>
<div style="left:30px;top:267px;width:792px;height:1px;background:#000"></div>
<div style="left:30px;top:339px;width:792px;height:1px;background:#000"></div>
<div style="left:605px;top:321px;width:216px;height:1px;background:#000"></div>
<div style="left:30px;top:285px;width:791px;height:1px;background:repeating-linear-gradient(90deg,#000 0 1px,transparent 1px 2px)"></div>
<div style="left:30px;top:303px;width:791px;height:1px;background:repeating-linear-gradient(90deg,#000 0 1px,transparent 1px 2px)"></div>
<div style="left:30px;top:321px;width:575px;height:1px;background:repeating-linear-gradient(90deg,#000 0 1px,transparent 1px 2px)"></div>
<div style="left:173px;top:249px;width:1px;height:90px;background:#000"></div>
<div style="left:317px;top:249px;width:1px;height:90px;background:#000"></div>
<div style="left:461px;top:249px;width:1px;height:90px;background:#000"></div>
<div style="left:605px;top:249px;width:1px;height:90px;background:#000"></div>
<div style="left:749px;top:249px;width:1px;height:90px;background:#000"></div>
<div style="left:821px;top:249px;width:1px;height:90px;background:#000"></div>
<div style="left:101px;top:250px;width:1px;height:89px;background:repeating-linear-gradient(180deg,#000 0 1px,transparent 1px 2px)"></div>
<div style="left:245px;top:250px;width:1px;height:89px;background:repeating-linear-gradient(180deg,#000 0 1px,transparent 1px 2px)"></div>
<div style="left:389px;top:250px;width:1px;height:89px;background:repeating-linear-gradient(180deg,#000 0 1px,transparent 1px 2px)"></div>
<div style="left:533px;top:250px;width:1px;height:89px;background:repeating-linear-gradient(180deg,#000 0 1px,transparent 1px 2px)"></div>
<div style="left:677px;top:250px;width:1px;height:89px;background:repeating-linear-gradient(180deg,#000 0 1px,transparent 1px 2px)"></div>
<div style="left:604px;top:266px;width:219px;height:75px;border:2px solid #217346"></div>
<div style="left:818px;top:336px;width:6px;height:6px;background:#217346;border-left:1px solid #fff;border-top:1px solid #fff"></div>
<div class="t c" style="left:31px;top:232px;color:#111;transform:scaleX(0.92)">WZgelsy2</div>
<div class="t c" style="left:31px;top:250px;color:#111">A</div>
<div class="t c" style="left:463px;top:250px;color:#111">B</div>
<div class="t c" style="left:607px;top:250px;color:#111">X</div>
<div class="t c" style="left:751px;top:250px;color:#111">Variance</div>
<div class="t c r" style="left:29px;top:268px;width:72px;color:#111">−0.82</div>
<div class="t c r" style="left:101px;top:268px;width:72px;color:#111">0.83</div>
<div class="t c r" style="left:173px;top:268px;width:72px;color:#111">0.18</div>
<div class="t c r" style="left:245px;top:268px;width:72px;color:#111">−0.94</div>
<div class="t c r" style="left:317px;top:268px;width:72px;color:#111">−0.18</div>
<div class="t c r" style="left:389px;top:268px;width:72px;color:#111">−0.12</div>
<div class="t c r" style="left:461px;top:268px;width:72px;color:#111">1.7126</div>
<div class="t c r" style="left:533px;top:268px;width:72px;color:#111">−0.6648</div>
<div class="t c r" style="left:677px;top:268px;width:72px;color:#111">−0.94</div>
<div class="t c r" style="left:749px;top:268px;width:72px;color:#111">5.461695</div>
<div class="t c r" style="left:29px;top:286px;width:72px;color:#111">−0.76</div>
<div class="t c r" style="left:101px;top:286px;width:72px;color:#111">−0.24</div>
<div class="t c r" style="left:173px;top:286px;width:72px;color:#111">0.57</div>
<div class="t c r" style="left:245px;top:286px;width:72px;color:#111">−0.16</div>
<div class="t c r" style="left:317px;top:286px;width:72px;color:#111">−0.08</div>
<div class="t c r" style="left:389px;top:286px;width:72px;color:#111">−0.27</div>
<div class="t c r" style="left:461px;top:286px;width:72px;color:#111">0.8697</div>
<div class="t c r" style="left:533px;top:286px;width:72px;color:#111">0.7604</div>
<div class="t c r" style="left:605px;top:286px;width:72px;color:#111">0.74</div>
<div class="t c r" style="left:677px;top:286px;width:72px;color:#111">0.2</div>
<div class="t c r" style="left:749px;top:286px;width:72px;color:#111">15.18805</div>
<div class="t c r" style="left:29px;top:304px;width:72px;color:#111">1.9</div>
<div class="t c r" style="left:101px;top:304px;width:72px;color:#111">0.26</div>
<div class="t c r" style="left:173px;top:304px;width:72px;color:#111">−0.98</div>
<div class="t c r" style="left:245px;top:304px;width:72px;color:#111">0.54</div>
<div class="t c r" style="left:317px;top:304px;width:72px;color:#111">0.21</div>
<div class="t c r" style="left:389px;top:304px;width:72px;color:#111">0.28</div>
<div class="t c r" style="left:461px;top:304px;width:72px;color:#111">−2.1048</div>
<div class="t c r" style="left:533px;top:304px;width:72px;color:#111">−1.6171</div>
<div class="t c r" style="left:605px;top:304px;width:72px;color:#111">0.48</div>
<div class="t c r" style="left:677px;top:304px;width:72px;color:#111">0.21</div>
<div class="t c r" style="left:749px;top:304px;width:72px;color:#111">21.42413</div>
<div class="t c r" style="left:29px;top:322px;width:72px;color:#111">0.5</div>
<div class="t c r" style="left:101px;top:322px;width:72px;color:#111">−0.3</div>
<div class="t c r" style="left:173px;top:322px;width:72px;color:#111">−0.31</div>
<div class="t c r" style="left:245px;top:322px;width:72px;color:#111">0.37</div>
<div class="t c r" style="left:317px;top:322px;width:72px;color:#111">0.22</div>
<div class="t c r" style="left:389px;top:322px;width:72px;color:#111">0.19</div>
<div class="t c r" style="left:461px;top:322px;width:72px;color:#111">−0.9297</div>
<div class="t c r" style="left:533px;top:322px;width:72px;color:#111">0.1252</div>
<div class="t c r" style="left:605px;top:322px;width:72px;color:#111">3</div>
<div class="t c r" style="left:677px;top:322px;width:72px;color:#111">0</div>
<div class="t c r" style="left:749px;top:322px;width:72px;color:#111">0</div>
<div class="t c" style="left:607px;top:268px;color:#111;letter-spacing:1.5px">“&thinsp;D”&thinsp;)</div>
<div style="left:830px;top:213px;width:533px;height:403px;background:#f0f0f0;border:1px solid #5c5c5c;box-shadow:1px 3px 16px rgba(0,0,0,0.3)"></div>
<div style="left:831px;top:214px;width:531px;height:30px;background:#fff"></div>
<div class="t" style="left:839px;top:222px;color:#111;font-size:13px;transform:scaleX(0.877);">関数の引数</div>
<div class="t" style="left:1291px;top:222px;color:#111;font-size:14px;transform:scaleX(0.770);">?</div>
<svg style="left:1334px;top:223px" width="11" height="11" viewBox="0 0 11 11"><path d="M0.5 0.5l10 10M10.5 0.5l-10 10" stroke="#111" stroke-width="1.1"/></svg>
<div style="left:837px;top:259px;width:518px;height:153px;border:1px solid #dcdcdc"></div>
<div style="left:841px;top:252px;width:62px;height:14px;background:#f0f0f0"></div>
<div class="t" style="left:844px;top:253px;color:#111;font-size:13px;transform:scaleX(0.969);">WZgelsy2</div>
<div style="left:899px;top:275px;width:198px;height:23px;background:#fff;border:1px solid #a0a0a0"></div>
<div style="left:1075px;top:275px;width:22px;height:23px;background:#e1e1e1;border:2px solid #a9a9a9;border-left-width:1px"></div>
<div style="left:1078px;top:279px;width:15px;height:13px;background:#fff"></div>
<svg style="left:1078px;top:279px" width="15" height="13" viewBox="0 0 15 13"><path d="M7.5 1.2l3.6 3.6l-0.8 0.8l-2-1.9v4.8h-1.6v-4.8l-2 1.9l-0.8-0.8z" fill="#000" stroke="#000" stroke-width="0.5" stroke-linejoin="round"/><rect x="3" y="10" width="8.5" height="1.2" fill="#000"/></svg>
<div class="t" style="left:880px;top:280px;color:#111;font-size:13px;transform:scaleX(0.922);">M</div>
<div style="left:902px;top:279px;width:8px;height:14px;background:#c8c8c8"></div>
<div class="t" style="left:903px;top:280px;color:#111;font-size:13px;transform:scaleX(0.968);">4</div>
<div style="left:910px;top:279px;width:1px;height:14px;background:#000"></div>
<div class="t" style="left:1107px;top:280px;color:#111;font-size:13px;transform:scaleX(1.053);">=</div>
<div class="t" style="left:1125px;top:280px;color:#111;font-size:13px;">4</div>
<div style="left:899px;top:302px;width:198px;height:23px;background:#fff;border:1px solid #a0a0a0"></div>
<div style="left:1075px;top:302px;width:22px;height:23px;background:#e1e1e1;border:2px solid #a9a9a9;border-left-width:1px"></div>
<div style="left:1078px;top:306px;width:15px;height:13px;background:#fff"></div>
<svg style="left:1078px;top:306px" width="15" height="13" viewBox="0 0 15 13"><path d="M7.5 1.2l3.6 3.6l-0.8 0.8l-2-1.9v4.8h-1.6v-4.8l-2 1.9l-0.8-0.8z" fill="#000" stroke="#000" stroke-width="0.5" stroke-linejoin="round"/><rect x="3" y="10" width="8.5" height="1.2" fill="#000"/></svg>
<div class="t" style="left:881px;top:307px;color:#111;font-size:13px;transform:scaleX(0.958);">N</div>
<div class="t" style="left:903px;top:307px;color:#111;font-size:13px;transform:scaleX(0.968);">3</div>
<div class="t" style="left:1107px;top:307px;color:#111;font-size:13px;transform:scaleX(1.053);">=</div>
<div class="t" style="left:1125px;top:307px;color:#111;font-size:13px;">3</div>
<div style="left:899px;top:329px;width:198px;height:23px;background:#fff;border:1px solid #a0a0a0"></div>
<div style="left:1075px;top:329px;width:22px;height:23px;background:#e1e1e1;border:2px solid #a9a9a9;border-left-width:1px"></div>
<div style="left:1078px;top:333px;width:15px;height:13px;background:#fff"></div>
<svg style="left:1078px;top:333px" width="15" height="13" viewBox="0 0 15 13"><path d="M7.5 1.2l3.6 3.6l-0.8 0.8l-2-1.9v4.8h-1.6v-4.8l-2 1.9l-0.8-0.8z" fill="#000" stroke="#000" stroke-width="0.5" stroke-linejoin="round"/><rect x="3" y="10" width="8.5" height="1.2" fill="#000"/></svg>
<div class="t" style="left:881px;top:334px;color:#111;font-size:13px;transform:scaleX(1.038);">A</div>
<div class="t" style="left:903px;top:334px;color:#111;font-size:13px;transform:scaleX(0.980);">A3:F6</div>
<div class="t" style="left:1107px;top:334px;color:#111;font-size:13px;transform:scaleX(1.053);">=</div>
<div class="t" style="left:1125px;top:334px;color:#111;font-size:13px;transform:scaleX(1.032);">{-0.82,0.83,0.18,-0.94,-0.18,-0....</div>
<div style="left:899px;top:356px;width:198px;height:23px;background:#fff;border:1px solid #a0a0a0"></div>
<div style="left:1075px;top:356px;width:22px;height:23px;background:#e1e1e1;border:2px solid #a9a9a9;border-left-width:1px"></div>
<div style="left:1078px;top:360px;width:15px;height:13px;background:#fff"></div>
<svg style="left:1078px;top:360px" width="15" height="13" viewBox="0 0 15 13"><path d="M7.5 1.2l3.6 3.6l-0.8 0.8l-2-1.9v4.8h-1.6v-4.8l-2 1.9l-0.8-0.8z" fill="#000" stroke="#000" stroke-width="0.5" stroke-linejoin="round"/><rect x="3" y="10" width="8.5" height="1.2" fill="#000"/></svg>
<div class="t" style="left:882px;top:361px;color:#111;font-size:13px;transform:scaleX(0.923);">B</div>
<div class="t" style="left:903px;top:361px;color:#111;font-size:13px;transform:scaleX(0.985);">G3:H6</div>
<div class="t" style="left:1107px;top:361px;color:#111;font-size:13px;transform:scaleX(1.053);">=</div>
<div class="t" style="left:1125px;top:361px;color:#111;font-size:13px;transform:scaleX(1.014);">{1.7126,-0.6648;0.8697,0.7604...</div>
<div style="left:899px;top:383px;width:198px;height:23px;background:#fff;border:1px solid #a0a0a0"></div>
<div style="left:1075px;top:383px;width:22px;height:23px;background:#e1e1e1;border:2px solid #a9a9a9;border-left-width:1px"></div>
<div style="left:1078px;top:387px;width:15px;height:13px;background:#fff"></div>
<svg style="left:1078px;top:387px" width="15" height="13" viewBox="0 0 15 13"><path d="M7.5 1.2l3.6 3.6l-0.8 0.8l-2-1.9v4.8h-1.6v-4.8l-2 1.9l-0.8-0.8z" fill="#000" stroke="#000" stroke-width="0.5" stroke-linejoin="round"/><rect x="3" y="10" width="8.5" height="1.2" fill="#000"/></svg>
<div class="t" style="left:863px;top:388px;color:#111;font-size:13px;transform:scaleX(0.983);">Nrhs</div>
<div class="t" style="left:1107px;top:388px;color:#111;font-size:13px;transform:scaleX(1.053);">=</div>
<div style="left:1330px;top:275px;width:17px;height:131px;background:#f0f0f0;border-left:1px solid #fff"></div>
<div style="left:1331px;top:292px;width:15px;height:69px;background:#cdcdcd"></div>
<svg style="left:1334px;top:280px" width="9" height="6" viewBox="0 0 9 6"><path d="M1 5l3.5-3.5l3.5 3.5" fill="none" stroke="#555" stroke-width="1.7"/></svg>
<svg style="left:1334px;top:396px" width="9" height="6" viewBox="0 0 9 6"><path d="M1 1l3.5 3.5l3.5-3.5" fill="none" stroke="#555" stroke-width="1.7"/></svg>
<div class="t" style="left:1107px;top:419px;color:#111;font-size:13px;transform:scaleX(1.053);">=</div>
<div class="t" style="left:1125px;top:419px;color:#111;font-size:13px;">{-0.819999999999999,-0.94000...</div>
<div class="t" style="left:837px;top:438px;color:#111;font-size:13px;transform:scaleX(0.928);">優決定または劣決定系連立一次方程式 AX = B の解 (完全直交分解) (複素行列) (実数部／虚数部</div>
<div class="t" style="left:837px;top:454px;color:#111;font-size:13px;transform:scaleX(0.923);">分離形式)</div>
<div class="t" style="left:1025px;top:481px;color:#111;font-size:13px;transform:scaleX(0.974);">M&nbsp;&nbsp;：Aの行数 (&gt;= 1)</div>
<div style="left:837px;top:538px;width:518px;height:1px;background:#d9d9d9"></div>
<div class="t" style="left:837px;top:554px;color:#111;font-size:13px;transform:scaleX(0.951);">数式の結果 =&nbsp;&nbsp; -0.82</div>
<div class="t" style="left:837px;top:587px;color:#0066cc;font-size:13px;text-decoration:underline;transform:scaleX(0.819);">この関数のヘルプ(H)</div>
<div style="left:1197px;top:581px;width:74px;height:25px;background:#e1e1e1;border:2px solid #0078d7"></div>
<div class="t" style="left:1225px;top:587px;color:#111;font-size:13px;transform:scaleX(0.904);">OK</div>
<div style="left:1281px;top:581px;width:74px;height:25px;background:#e1e1e1;border:1px solid #adadad"></div>
<div class="t" style="left:1294px;top:587px;color:#111;font-size:13px;transform:scaleX(0.723);">キャンセル</div>
</body></html>
